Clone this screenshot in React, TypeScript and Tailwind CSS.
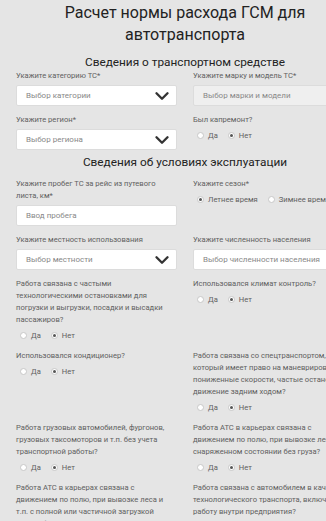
import React from 'react';
import { ChevronDown } from 'lucide-react';

const font = { fontFamily: 'Roboto, "Open Sans", sans-serif' };

// label text keeps the line breaks seen on the form
const Label = ({ lines }: { lines: string[] }) => (
  <div className="text-[7.6px] leading-[12px] text-[#606060]">
    {lines.map((l) => (
      <div key={l} className="whitespace-nowrap">
        {l}
      </div>
    ))}
  </div>
);

const Select = ({ placeholder, disabled }: { placeholder: string; disabled?: boolean }) => (
  <div
    className={`relative mt-[3px] flex h-[21px] items-center rounded-[2px] border border-[#dcdcdc] pl-[9px] text-[8px] text-[#888] ${
      disabled ? 'bg-[#efefef]' : 'bg-white'
    }`}
  >
    {placeholder}
    {!disabled && (
      <ChevronDown size={22} strokeWidth={2.6} className="absolute right-[3px] text-[#333]" />
    )}
  </div>
);

const Input = ({ placeholder }: { placeholder: string }) => (
  <div className="mt-[3px] flex h-[21px] items-center rounded-[2px] border border-[#dcdcdc] bg-white pl-[9px] text-[8px] text-[#888]">
    {placeholder}
  </div>
);

const Radio = ({ checked }: { checked?: boolean }) => (
  <span className="flex h-[7px] w-[7px] items-center justify-center rounded-full border border-[#c8c8c8] bg-white">
    {checked && <span className="h-[3px] w-[3px] rounded-full bg-[#555]" />}
  </span>
);

const RadioGroup = ({ options, checked }: { options: string[]; checked: number }) => (
  <div className="mt-[4px] flex h-[12px] items-center pl-[4px] text-[7.6px] text-[#606060]">
    {options.map((o, i) => (
      <div key={o} className={`flex items-center gap-[4px] ${i > 0 ? 'ml-[10px]' : ''}`}>
        <Radio checked={i === checked} />
        <span>{o}</span>
      </div>
    ))}
  </div>
);

const yesNo = ['Да', 'Нет'];

const Question = ({ lines }: { lines: string[] }) => (
  <div>
    <Label lines={lines} />
    <RadioGroup options={yesNo} checked={1} />
  </div>
);

export default function App() {
  return (
    <div className="h-[521px] w-[326px] overflow-hidden bg-[#e5e5e5]" style={font}>
      <div className="w-[370px] px-4 pt-[2px]">
        <h1 className="text-center text-[16px] leading-[22px] text-[#222]">
          Расчет нормы расхода ГСМ для
          <br />
          автотранспорта
        </h1>
        <h2 className="mt-[8px] text-center text-[11.8px] leading-[16px] text-[#222]">
          Сведения о транспортном средстве
        </h2>

        <div className="grid grid-cols-2 gap-x-4 gap-y-[8px]">
          <div>
            <Label lines={['Укажите категорию ТС*']} />
            <Select placeholder="Выбор категории" />
          </div>
          <div>
            <Label lines={['Укажите марку и модель ТС*']} />
            <Select placeholder="Выбор марки и модели" disabled />
          </div>
          <div>
            <Label lines={['Укажите регион*']} />
            <Select placeholder="Выбор региона" />
          </div>
          <Question lines={['Был капремонт?']} />
        </div>

        <h2 className="mt-[4px] text-center text-[11.8px] leading-[16px] text-[#222]">
          Сведения об условиях эксплуатации
        </h2>

        <div className="mt-[8px] grid grid-cols-2 gap-x-4 gap-y-[8px]">
          <div>
            <Label lines={['Укажите пробег ТС за рейс из путевого', 'листа, км*']} />
            <Input placeholder="Ввод пробега" />
          </div>
          <div>
            <Label lines={['Укажите сезон*']} />
            <RadioGroup options={['Летнее время', 'Зимнее время']} checked={0} />
          </div>
          <div>
            <Label lines={['Укажите местность использования']} />
            <Select placeholder="Выбор местности" />
          </div>
          <div>
            <Label lines={['Укажите численность населения']} />
            <Select placeholder="Выбор численности населения" />
          </div>
          <Question
            lines={[
              'Работа связана с частыми',
              'технологическими остановками для',
              'погрузки и выгрузки, посадки и высадки',
              'пассажиров?',
            ]}
          />
          <Question lines={['Использовался климат контроль?']} />
          <Question lines={['Использовался кондиционер?']} />
          <Question
            lines={[
              'Работа связана со спецтранспортом,',
              'который имеет право на маневрирование,',
              'пониженные скорости, частые остановки,',
              'движение задним ходом?',
            ]}
          />
          <Question
            lines={[
              'Работа грузовых автомобилей, фургонов,',
              'грузовых таксомоторов и т.п. без учета',
              'транспортной работы?',
            ]}
          />
          <Question
            lines={[
              'Работа АТС в карьерах связана с',
              'движением по полю, при вывозке леса и т.п. в',
              'снаряженном состоянии без груза?',
            ]}
          />
          <Question
            lines={[
              'Работа АТС в карьерах связана с',
              'движением по полю, при вывозке леса и',
              'т.п. с полной или частичной загрузкой',
              'автомобиля?',
            ]}
          />
          <Question
            lines={[
              'Работа связана с автомобилем в качестве',
              'технологического транспорта, включая',
              'работу внутри предприятия?',
            ]}
          />
        </div>
      </div>
    </div>
  );
}
